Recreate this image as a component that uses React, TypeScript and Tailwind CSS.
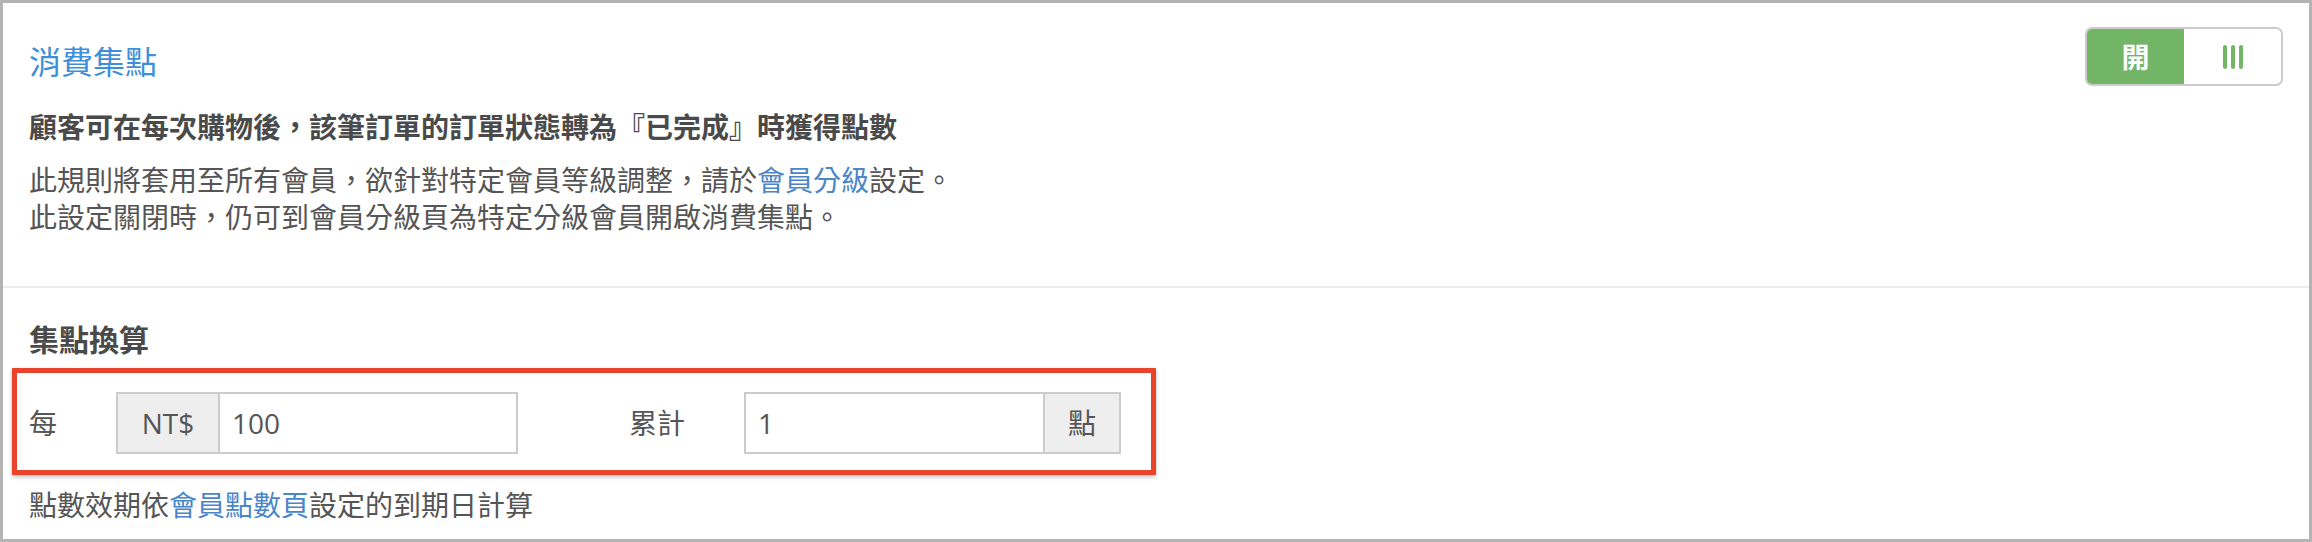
import { useState } from "react";

function PointsToggle() {
  const [on, setOn] = useState(true);

  return (
    <button
      type="button"
      onClick={() => setOn(!on)}
      className="flex w-[198px] h-[59px] shrink-0 overflow-hidden rounded-[7px] border-2 border-[#cccccc] bg-white"
    >
      <span
        className={`flex flex-1 items-center justify-center text-[28px] font-bold ${on ? "bg-[#72b566] text-white" : "text-transparent"}`}
      >
        開
      </span>
      <span className="flex flex-1 items-center justify-center gap-[4px]">
        <span className="w-[4px] h-[24px] rounded-full bg-[#72b566]" />
        <span className="w-[4px] h-[24px] rounded-full bg-[#72b566]" />
        <span className="w-[4px] h-[24px] rounded-full bg-[#72b566]" />
      </span>
    </button>
  );
}

function InputGroup({
  value,
  addon,
  addonSide,
  width,
  addonWidth,
}: {
  value: string;
  addon: string;
  addonSide: "left" | "right";
  width: string;
  addonWidth: string;
}) {
  const addonEl = (
    <span
      className={`flex items-center justify-center bg-[#eeeeee] text-[28px] text-[#555555] ${addonWidth} ${addonSide === "left" ? "border-r-2" : "border-l-2"} border-[#cccccc]`}
    >
      {addon}
    </span>
  );

  return (
    <div className={`flex h-[62px] border-2 border-[#cccccc] bg-white ${width}`}>
      {addonSide === "left" && addonEl}
      <input
        type="text"
        defaultValue={value}
        className="min-w-0 flex-1 px-[12px] text-[28px] text-[#555555] outline-none bg-transparent"
      />
      {addonSide === "right" && addonEl}
    </div>
  );
}

export default function App() {
  return (
    <div className="w-[2312px] h-[542px] border-[3px] border-[#b3b3b3] bg-white font-['Open_Sans','Noto_Sans_CJK_TC',sans-serif] text-[#555555]">
      {/* Header */}
      <div className="pl-[26px] pr-[26px] pb-[50px] border-b-2 border-[#ebebeb]">
        <div className="flex items-start justify-between pt-[24px]">
          <h2 className="mt-[13px] text-[32px] leading-[44px] text-[#3d8fd9]">消費集點</h2>
          <PointsToggle />
        </div>
        <p className="mt-[21px] text-[28px] leading-[40px] font-bold text-[#4a4a4a]">
          顧客可在每次購物後，該筆訂單的訂單狀態轉為『已完成』時獲得點數
        </p>
        <p className="mt-[15px] text-[28px] leading-[37px]">
          此規則將套用至所有會員，欲針對特定會員等級調整，請於
          <a href="#" className="text-[#4a86c8]">會員分級</a>
          設定。
          <br />
          此設定關閉時，仍可到會員分級頁為特定分級會員開啟消費集點。
        </p>
      </div>

      {/* Conversion */}
      <div className="pl-[26px] pr-[26px] pt-[32px] pb-[14px]">
        <h3 className="text-[30px] leading-[40px] font-bold text-[#4a4a4a]">集點換算</h3>
        <div className="mt-[8px] -ml-[17px] w-[1144px] border-[5px] border-[#e9432b] pl-[12px] pt-[19px] pb-[16px] shadow-[0_2px_4px_rgba(0,0,0,0.25)]">
          <div className="flex items-center">
            <span className="w-[87px] text-[28px]">每</span>
            <InputGroup value="100" addon="NT$" addonSide="left" width="w-[402px]" addonWidth="w-[102px]" />
            <span className="ml-[111px] w-[115px] text-[28px]">累計</span>
            <InputGroup value="1" addon="點" addonSide="right" width="w-[377px]" addonWidth="w-[76px]" />
          </div>
        </div>
        <p className="mt-[10px] text-[28px] leading-[40px]">
          點數效期依<a href="#" className="text-[#4a86c8]">會員點數頁</a>設定的到期日計算
        </p>
      </div>
    </div>
  );
}
